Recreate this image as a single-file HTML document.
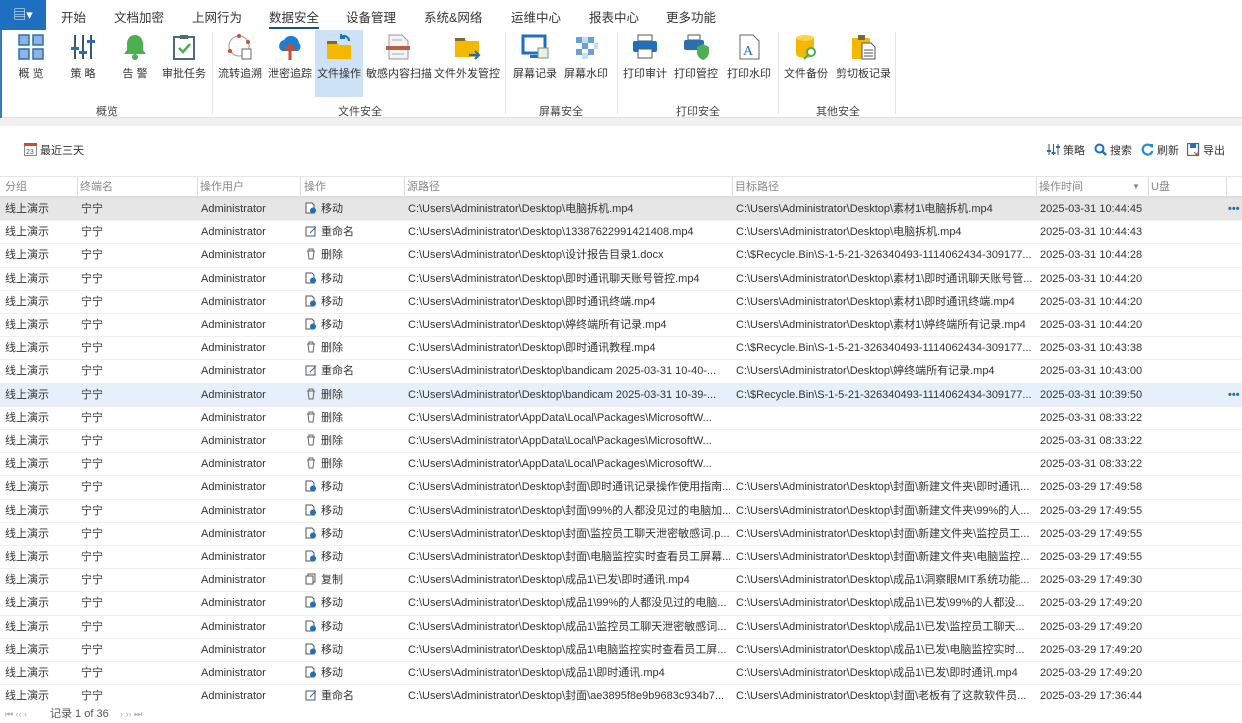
<!DOCTYPE html>
<html><head><meta charset="utf-8"><style>
*{box-sizing:border-box;margin:0;padding:0}
body{width:1242px;height:723px;overflow:hidden;background:#fff;font-family:"Liberation Sans","Noto Sans CJK SC",sans-serif;font-size:11px;color:#333;position:relative}
.tabs{position:absolute;left:0;top:0;width:1242px;height:30px;background:#fff}
.filebtn{position:absolute;left:0;top:0;width:46px;height:30px;background:#1e6fc0;color:#fff;text-align:center;line-height:30px;font-size:13px}
.tab{position:absolute;top:7px;font-size:12.5px;color:#333}
.tab.act{border-bottom:2px solid #1e4f7e;padding-bottom:1px}
.ribbon{position:absolute;left:0;top:30px;width:1242px;height:88px;background:#fff;border-bottom:1px solid #e2e2e2}
.btn{position:absolute;top:0;height:66px;text-align:center;font-size:11px;color:#333}
.btn .ic{position:absolute;top:3px;left:50%;margin-left:-14px;width:28px;height:28px}
.btn .lb{position:absolute;top:35px;left:0;right:0;white-space:nowrap}
.sel{background:#cde2f4}
.grp{position:absolute;top:73px;font-size:11px;color:#444}
.vsep{position:absolute;top:2px;width:1px;height:82px;background:#e4e4e4}
.gray{position:absolute;left:0;top:118px;width:1242px;height:8px;background:#f0f0f0}
.leftbar{position:absolute;left:0;top:30px;width:2px;height:88px;background:#3a7ab8}
.tool{position:absolute;top:143px;font-size:11px;color:#333;line-height:14px}
.hdr{position:absolute;left:0;top:176px;width:1242px;height:22px;border-top:1px solid #e6e6e6;border-bottom:2px solid #ddd;background:#fff}
.hdr span{position:absolute;top:0;line-height:20px;color:#888;font-size:11px}
.hdr i{position:absolute;top:0;width:1px;height:20px;background:#ddd}
.row{position:absolute;left:0;width:1242px;height:23.2px;border-bottom:1px solid #f0f0f0;font-size:11px;color:#333;white-space:nowrap}
.row span{position:absolute;top:0;line-height:22px;height:22px;overflow:hidden}
.c1{left:5px}.c2{left:81px}.c3{left:201px}.c4{left:305px}.c5{left:408px;width:322px}.c6{left:736px;width:298px}.c7{left:1040px}
.dots{left:1228px!important;color:#2b6cb0;font-weight:bold}
.op{display:inline-block;width:12px;height:12px;vertical-align:middle;margin-right:4px;margin-top:-2px}
.foot{position:absolute;left:0;top:705px;width:1242px;height:18px;background:#fff;font-size:11px;color:#555;line-height:18px}
</style></head><body>
<div class="tabs">
<div class="filebtn">▤▾</div>
<span class="tab" style="left:61px">开始</span>
<span class="tab" style="left:114px">文档加密</span>
<span class="tab" style="left:192px">上网行为</span>
<span class="tab act" style="left:269px">数据安全</span>
<span class="tab" style="left:346px">设备管理</span>
<span class="tab" style="left:424px">系统&amp;网络</span>
<span class="tab" style="left:511px">运维中心</span>
<span class="tab" style="left:589px">报表中心</span>
<span class="tab" style="left:666px">更多功能</span>
</div>
<div class="ribbon">
<div class="btn" style="left:10px;width:42px"><svg class="ic" viewBox="0 0 28 28"><g fill="#8ab6e0" stroke="#2d6fae" stroke-width="1.5"><rect x="2" y="2" width="10" height="10"/><rect x="16" y="2" width="10" height="10"/><rect x="2" y="16" width="10" height="10"/><rect x="16" y="16" width="10" height="10"/></g></svg><div class="lb">概 览</div></div>
<div class="btn" style="left:62px;width:42px"><svg class="ic" viewBox="0 0 28 28"><g stroke="#3b5670" stroke-width="2"><line x1="6" y1="2" x2="6" y2="26"/><line x1="14" y1="2" x2="14" y2="26"/><line x1="22" y1="2" x2="22" y2="26"/></g><g fill="#2d6fae"><rect x="2" y="14" width="8" height="3"/><rect x="10" y="18" width="8" height="3"/><rect x="18" y="7" width="8" height="3"/></g></svg><div class="lb">策 略</div></div>
<div class="btn" style="left:114px;width:42px"><svg class="ic" viewBox="0 0 28 28"><path d="M14 2c-5 0-8 4-8 9v6l-3 4h22l-3-4v-6c0-5-3-9-8-9z" fill="#4caf50"/><circle cx="14" cy="24" r="3" fill="#4caf50"/></svg><div class="lb">告 警</div></div>
<div class="btn" style="left:162px;width:44px"><svg class="ic" viewBox="0 0 28 28"><rect x="4" y="4" width="20" height="22" fill="#fff" stroke="#4a6b80" stroke-width="2"/><rect x="10" y="2" width="8" height="4" fill="#4a6b80"/><path d="M9 15l4 4 7-8" stroke="#4caf50" stroke-width="2.5" fill="none"/></svg><div class="lb">审批任务</div></div>
<div class="vsep" style="left:212px"></div>
<div class="btn" style="left:218px;width:44px"><svg class="ic" viewBox="0 0 28 28"><circle cx="13" cy="13" r="10" fill="none" stroke="#aaa" stroke-width="1.2"/><circle cx="13" cy="3" r="2" fill="#d24a2a"/><circle cx="4" cy="18" r="2" fill="#d24a2a"/><circle cx="22" cy="9" r="2" fill="#d24a2a"/><rect x="16" y="16" width="9" height="10" fill="#fff" stroke="#666"/></svg><div class="lb">流转追溯</div></div>
<div class="btn" style="left:267px;width:46px"><svg class="ic" viewBox="0 0 28 28"><path d="M6 18a6 6 0 0 1 2-11 8 8 0 0 1 15 3 5 5 0 0 1-1 8z" fill="#1e7fd0"/><path d="M14 27v-14M9 17l5-5 5 5" stroke="#d24a2a" stroke-width="3" fill="none"/></svg><div class="lb">泄密追踪</div></div>
<div class="btn sel" style="left:315px;width:48px;height:67px"><svg class="ic" viewBox="0 0 28 28"><path d="M2 10h10l2 2h12v14H2z" fill="#f5b800"/><rect x="2" y="8" width="10" height="3" fill="#7a6a3a"/><path d="M24 8a5 5 0 0 0-8-4M16 1v4h4" stroke="#1e6fc0" stroke-width="2" fill="none"/></svg><div class="lb">文件操作</div></div>
<div class="btn" style="left:366px;width:64px"><svg class="ic" viewBox="0 0 28 28"><path d="M5 2h13l6 6v18H5z" fill="#f4f4f4" stroke="#999"/><rect x="2" y="13" width="24" height="4" fill="#b86040"/><g stroke="#aaa"><line x1="8" y1="7" x2="18" y2="7"/><line x1="8" y1="21" x2="20" y2="21"/></g></svg><div class="lb">敏感内容扫描</div></div>
<div class="btn" style="left:434px;width:66px"><svg class="ic" viewBox="0 0 28 28"><path d="M2 6h10l2 2h12v16H2z" fill="#f5b800"/><rect x="2" y="5" width="10" height="3" fill="#7a6a3a"/><path d="M16 22h9M22 18l4 4-4 4" stroke="#1e6fc0" stroke-width="2.2" fill="none"/></svg><div class="lb">文件外发管控</div></div>
<div class="vsep" style="left:505px"></div>
<div class="btn" style="left:512px;width:46px"><svg class="ic" viewBox="0 0 28 28"><rect x="2" y="3" width="22" height="17" fill="#fff" stroke="#1e6fc0" stroke-width="3"/><rect x="9" y="22" width="8" height="3" fill="#1e6fc0"/><rect x="17" y="15" width="10" height="10" fill="#e8f2e0" stroke="#888"/></svg><div class="lb">屏幕记录</div></div>
<div class="btn" style="left:563px;width:46px"><svg class="ic" viewBox="0 0 28 28"><g fill="#6aa0d8"><rect x="4" y="4" width="6" height="6"/><rect x="16" y="4" width="6" height="6"/><rect x="10" y="10" width="6" height="6"/><rect x="4" y="16" width="6" height="6"/><rect x="16" y="16" width="6" height="6"/></g><g fill="#c8dcf0"><rect x="10" y="4" width="6" height="6"/><rect x="22" y="10" width="4" height="6"/><rect x="10" y="20" width="6" height="6"/></g></svg><div class="lb">屏幕水印</div></div>
<div class="vsep" style="left:617px"></div>
<div class="btn" style="left:622px;width:46px"><svg class="ic" viewBox="0 0 28 28"><rect x="7" y="2" width="14" height="6" fill="#fff" stroke="#555"/><rect x="2" y="8" width="24" height="11" rx="2" fill="#1e6fc0"/><rect x="7" y="16" width="14" height="9" fill="#fff" stroke="#555"/></svg><div class="lb">打印审计</div></div>
<div class="btn" style="left:673px;width:46px"><svg class="ic" viewBox="0 0 28 28"><rect x="6" y="2" width="12" height="5" fill="#fff" stroke="#555"/><rect x="2" y="7" width="20" height="10" rx="2" fill="#2d6fae"/><path d="M15 14l6-3 6 3v5c0 4-3 7-6 8-3-1-6-4-6-8z" fill="#4caf50"/></svg><div class="lb">打印管控</div></div>
<div class="btn" style="left:726px;width:46px"><svg class="ic" viewBox="0 0 28 28"><path d="M5 2h13l6 6v18H5z" fill="#fff" stroke="#666"/><text x="8" y="22" font-size="14" fill="#1e6fc0" font-family="Liberation Serif">A</text></svg><div class="lb">打印水印</div></div>
<div class="vsep" style="left:778px"></div>
<div class="btn" style="left:783px;width:46px"><svg class="ic" viewBox="0 0 28 28"><path d="M4 5v16c0 2 4 4 9 4s9-2 9-4V5z" fill="#f5b800"/><ellipse cx="13" cy="5" rx="9" ry="3" fill="#ffd24a"/><circle cx="19" cy="19" r="4" fill="#fff" stroke="#4caf50" stroke-width="2"/><line x1="16" y1="22" x2="12" y2="26" stroke="#4caf50" stroke-width="2"/></svg><div class="lb">文件备份</div></div>
<div class="btn" style="left:836px;width:54px"><svg class="ic" viewBox="0 0 28 28"><rect x="3" y="5" width="18" height="21" fill="#f5b800"/><rect x="9" y="2" width="7" height="5" fill="#7a6a3a"/><path d="M13 10h9l4 4v12H13z" fill="#fff" stroke="#555"/><g stroke="#555"><line x1="15" y1="17" x2="24" y2="17"/><line x1="15" y1="20" x2="24" y2="20"/><line x1="15" y1="23" x2="24" y2="23"/></g></svg><div class="lb">剪切板记录</div></div>
<div class="vsep" style="left:895px"></div>
<span class="grp" style="left:96px">概览</span>
<span class="grp" style="left:338px">文件安全</span>
<span class="grp" style="left:539px">屏幕安全</span>
<span class="grp" style="left:676px">打印安全</span>
<span class="grp" style="left:816px">其他安全</span>
</div>
<div class="leftbar"></div>
<div class="gray"></div>
<div class="tool" style="left:24px"><svg width="13" height="13" viewBox="0 0 13 13" style="vertical-align:-2px"><rect x="0.5" y="0.5" width="12" height="12" fill="#fff" stroke="#888"/><rect x="0" y="0" width="13" height="3" fill="#d24a2a"/><text x="2" y="11" font-size="7" fill="#555">23</text></svg> 最近三天</div>
<div class="tool" style="left:1047px"><svg width="13" height="13" viewBox="0 0 13 13" style="vertical-align:-2px"><g stroke="#3b5670"><line x1="2" y1="1" x2="2" y2="12"/><line x1="6.5" y1="1" x2="6.5" y2="12"/><line x1="11" y1="1" x2="11" y2="12"/></g><g fill="#2d6fae"><rect x="0" y="7" width="4" height="2"/><rect x="4.5" y="9" width="4" height="2"/><rect x="9" y="3" width="4" height="2"/></g></svg> 策略</div>
<div class="tool" style="left:1094px"><svg width="13" height="13" viewBox="0 0 13 13" style="vertical-align:-2px"><circle cx="5.5" cy="5.5" r="4" fill="none" stroke="#1e6fc0" stroke-width="2"/><line x1="8.5" y1="8.5" x2="12" y2="12" stroke="#1e6fc0" stroke-width="2.4"/></svg> 搜索</div>
<div class="tool" style="left:1141px"><svg width="13" height="13" viewBox="0 0 13 13" style="vertical-align:-2px"><path d="M11 4A5 5 0 1 0 11.5 8" fill="none" stroke="#1e8fd0" stroke-width="2.2"/><path d="M8 1l4 0 0 4z" fill="#1e8fd0"/></svg> 刷新</div>
<div class="tool" style="left:1187px"><svg width="13" height="13" viewBox="0 0 13 13" style="vertical-align:-2px"><rect x="0.5" y="0.5" width="11" height="12" fill="#fff" stroke="#2d6fae" stroke-width="1.3"/><rect x="3" y="1" width="6" height="4" fill="#2d6fae"/><path d="M7 9l5 4M12 9l-5 4" stroke="#d24a2a"/></svg> 导出</div>
<div class="hdr">
<span style="left:5px">分组</span><i style="left:77px"></i>
<span style="left:80px">终端名</span><i style="left:197px"></i>
<span style="left:200px">操作用户</span><i style="left:300px"></i>
<span style="left:304px">操作</span><i style="left:404px"></i>
<span style="left:407px">源路径</span><i style="left:732px"></i>
<span style="left:735px">目标路径</span><i style="left:1036px"></i>
<span style="left:1039px">操作时间</span><span style="left:1132px;font-size:8px">▼</span><i style="left:1148px"></i>
<span style="left:1151px">U盘</span><i style="left:1226px"></i>
</div>
<div id="rows"></div>
<div class="foot"><span style="position:absolute;left:5px;top:0;color:#aaa;font-size:9px">⏮ ‹‹ ‹</span><span style="position:absolute;left:50px;top:0">记录 1 of 36</span><span style="position:absolute;left:120px;top:0;color:#aaa;font-size:9px">› ›› ⏭</span></div>
<script>
var M='<svg class="op" viewBox="0 0 12 12"><path d="M1 1h6l2 2v8H1z" fill="#fff" stroke="#555"/><circle cx="8" cy="8.5" r="3" fill="#1e6fc0"/></svg>移动';
var R='<svg class="op" viewBox="0 0 12 12"><rect x="1" y="2" width="9" height="9" fill="none" stroke="#555"/><path d="M5 8l6-6" stroke="#1e6fc0"/></svg>重命名';
var D='<svg class="op" viewBox="0 0 12 12"><path d="M2 3h8M4 3V1h4v2M3 3l1 8h4l1-8" fill="none" stroke="#666"/></svg>删除';
var C='<svg class="op" viewBox="0 0 12 12"><rect x="3" y="1" width="7" height="8" fill="none" stroke="#555"/><rect x="1" y="3" width="7" height="8" fill="#fff" stroke="#555"/></svg>复制';
var A='C:\\Users\\Administrator\\Desktop\\';
var d=[
[M,A+'电脑拆机.mp4',A+'素材1\\电脑拆机.mp4','2025-03-31 10:44:45'],
[R,A+'13387622991421408.mp4',A+'电脑拆机.mp4','2025-03-31 10:44:43'],
[D,A+'设计报告目录1.docx','C:\\$Recycle.Bin\\S-1-5-21-326340493-1114062434-309177...','2025-03-31 10:44:28'],
[M,A+'即时通讯聊天账号管控.mp4',A+'素材1\\即时通讯聊天账号管...','2025-03-31 10:44:20'],
[M,A+'即时通讯终端.mp4',A+'素材1\\即时通讯终端.mp4','2025-03-31 10:44:20'],
[M,A+'婷终端所有记录.mp4',A+'素材1\\婷终端所有记录.mp4','2025-03-31 10:44:20'],
[D,A+'即时通讯教程.mp4','C:\\$Recycle.Bin\\S-1-5-21-326340493-1114062434-309177...','2025-03-31 10:43:38'],
[R,A+'bandicam 2025-03-31 10-40-...',A+'婷终端所有记录.mp4','2025-03-31 10:43:00'],
[D,A+'bandicam 2025-03-31 10-39-...','C:\\$Recycle.Bin\\S-1-5-21-326340493-1114062434-309177...','2025-03-31 10:39:50'],
[D,'C:\\Users\\Administrator\\AppData\\Local\\Packages\\MicrosoftW...','','2025-03-31 08:33:22'],
[D,'C:\\Users\\Administrator\\AppData\\Local\\Packages\\MicrosoftW...','','2025-03-31 08:33:22'],
[D,'C:\\Users\\Administrator\\AppData\\Local\\Packages\\MicrosoftW...','','2025-03-31 08:33:22'],
[M,A+'封面\\即时通讯记录操作使用指南...',A+'封面\\新建文件夹\\即时通讯...','2025-03-29 17:49:58'],
[M,A+'封面\\99%的人都没见过的电脑加...',A+'封面\\新建文件夹\\99%的人...','2025-03-29 17:49:55'],
[M,A+'封面\\监控员工聊天泄密敏感词.p...',A+'封面\\新建文件夹\\监控员工...','2025-03-29 17:49:55'],
[M,A+'封面\\电脑监控实时查看员工屏幕...',A+'封面\\新建文件夹\\电脑监控...','2025-03-29 17:49:55'],
[C,A+'成品1\\已发\\即时通讯.mp4',A+'成品1\\洞察眼MIT系统功能...','2025-03-29 17:49:30'],
[M,A+'成品1\\99%的人都没见过的电脑...',A+'成品1\\已发\\99%的人都没...','2025-03-29 17:49:20'],
[M,A+'成品1\\监控员工聊天泄密敏感词...',A+'成品1\\已发\\监控员工聊天...','2025-03-29 17:49:20'],
[M,A+'成品1\\电脑监控实时查看员工屏...',A+'成品1\\已发\\电脑监控实时...','2025-03-29 17:49:20'],
[M,A+'成品1\\即时通讯.mp4',A+'成品1\\已发\\即时通讯.mp4','2025-03-29 17:49:20'],
[R,A+'封面\\ae3895f8e9b9683c934b7...',A+'封面\\老板有了这款软件员...','2025-03-29 17:36:44']];
var h='';
for(var i=0;i<d.length;i++){var y=198+i*23.2;var bg=i==0?'#e6e6e6':(i==8?'#e5f0fb':'#fff');
h+='<div class="row" style="top:'+y+'px;background:'+bg+'"><span class="c1">线上演示</span><span class="c2">宁宁</span><span class="c3">Administrator</span><span class="c4">'+d[i][0]+'</span><span class="c5">'+d[i][1]+'</span><span class="c6">'+d[i][2]+'</span><span class="c7">'+d[i][3]+'</span>'+((i==0||i==8)?'<span class="dots">•••</span>':'')+'</div>';}
document.getElementById('rows').innerHTML=h;
</script>
</body></html>
